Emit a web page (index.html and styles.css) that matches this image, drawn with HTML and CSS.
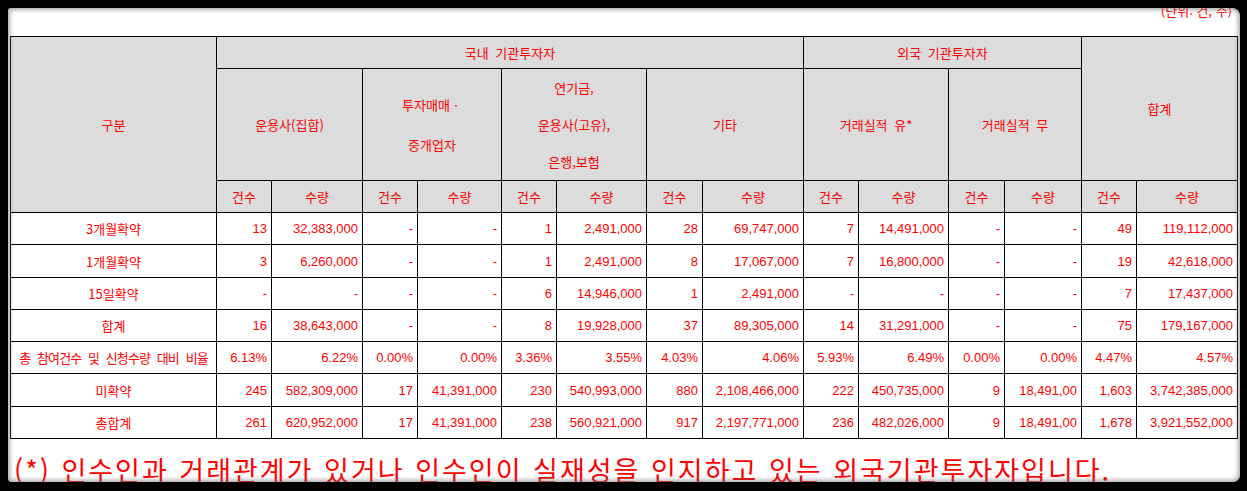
FILE: index.html
```html
<!DOCTYPE html>
<html lang="ko">
<head>
<meta charset="utf-8">
<title>수요예측 참여 내역</title>
<link rel="stylesheet" href="styles.css">
</head>
<body>
<div class="frame">
  <div class="unit">(단위: 건, 주)</div>
  <table class="grid">
    <colgroup>
      <col class="c-label">
      <col class="c55"><col class="c91">
      <col class="c55"><col class="c84">
      <col class="c55"><col class="c90">
      <col class="c56"><col class="c101">
      <col class="c55"><col class="c90">
      <col class="c56"><col class="c77">
      <col class="c55"><col class="c101">
    </colgroup>
    <thead>
      <tr class="h1">
        <th rowspan="3">구분</th>
        <th colspan="8">국내 기관투자자</th>
        <th colspan="4">외국 기관투자자</th>
        <th colspan="2" rowspan="2">합계</th>
      </tr>
      <tr class="h2">
        <th colspan="2">운용사(집합)</th>
        <th colspan="2" class="two">투자매매ㆍ<br>중개업자</th>
        <th colspan="2" class="three">연기금,<br>운용사(고유),<br>은행,보험</th>
        <th colspan="2">기타</th>
        <th colspan="2">거래실적 유*</th>
        <th colspan="2">거래실적 무</th>
      </tr>
      <tr class="h3">
        <th>건수</th><th>수량</th>
        <th>건수</th><th>수량</th>
        <th>건수</th><th>수량</th>
        <th>건수</th><th>수량</th>
        <th>건수</th><th>수량</th>
        <th>건수</th><th>수량</th>
        <th>건수</th><th>수량</th>
      </tr>
    </thead>
    <tbody>
      <tr class="r32">
        <td class="label">3개월확약</td>
        <td>13</td><td>32,383,000</td><td>-</td><td>-</td><td>1</td><td>2,491,000</td><td>28</td><td>69,747,000</td><td>7</td><td>14,491,000</td><td>-</td><td>-</td><td>49</td><td>119,112,000</td>
      </tr>
      <tr class="r33">
        <td class="label">1개월확약</td>
        <td>3</td><td>6,260,000</td><td>-</td><td>-</td><td>1</td><td>2,491,000</td><td>8</td><td>17,067,000</td><td>7</td><td>16,800,000</td><td>-</td><td>-</td><td>19</td><td>42,618,000</td>
      </tr>
      <tr class="r32">
        <td class="label">15일확약</td>
        <td>-</td><td>-</td><td>-</td><td>-</td><td>6</td><td>14,946,000</td><td>1</td><td>2,491,000</td><td>-</td><td>-</td><td>-</td><td>-</td><td>7</td><td>17,437,000</td>
      </tr>
      <tr class="r32">
        <td class="label">합계</td>
        <td>16</td><td>38,643,000</td><td>-</td><td>-</td><td>8</td><td>19,928,000</td><td>37</td><td>89,305,000</td><td>14</td><td>31,291,000</td><td>-</td><td>-</td><td>75</td><td>179,167,000</td>
      </tr>
      <tr class="r32">
        <td class="label tight">총 참여건수 및 신청수량 대비 비율</td>
        <td>6.13%</td><td>6.22%</td><td>0.00%</td><td>0.00%</td><td>3.36%</td><td>3.55%</td><td>4.03%</td><td>4.06%</td><td>5.93%</td><td>6.49%</td><td>0.00%</td><td>0.00%</td><td>4.47%</td><td>4.57%</td>
      </tr>
      <tr class="r33">
        <td class="label">미확약</td>
        <td>245</td><td>582,309,000</td><td>17</td><td>41,391,000</td><td>230</td><td>540,993,000</td><td>880</td><td>2,108,466,000</td><td>222</td><td>450,735,000</td><td>9</td><td>18,491,00</td><td>1,603</td><td>3,742,385,000</td>
      </tr>
      <tr class="r32">
        <td class="label">총합계</td>
        <td>261</td><td>620,952,000</td><td>17</td><td>41,391,000</td><td>238</td><td>560,921,000</td><td>917</td><td>2,197,771,000</td><td>236</td><td>482,026,000</td><td>9</td><td>18,491,00</td><td>1,678</td><td>3,921,552,000</td>
      </tr>
    </tbody>
  </table>
  <p class="note">(*) 인수인과 거래관계가 있거나 인수인이 실재성을 인지하고 있는 외국기관투자자입니다.</p>
</div>
</body>
</html>
```
FILE: styles.css
```css
html, body {
  margin: 0;
  padding: 0;
  background: #000;
}

body {
  width: 1247px;
  height: 491px;
  overflow: hidden;
  font-family: "Noto Sans CJK KR", "Liberation Sans", sans-serif;
  color: #ff0000;
}

.frame {
  position: relative;
  box-sizing: border-box;
  margin: 8px 0 0 8px;
  width: 1232px;
  height: 474px;
  padding-left: 2px;
  background: #fff;
  border-radius: 3px 8px 7px 4px;
  overflow: hidden;
}

.frame::after {
  content: "";
  position: absolute;
  inset: 0;
  border-radius: inherit;
  box-shadow: inset 0 0 4px 2px rgba(110, 110, 110, 0.6);
  pointer-events: none;
}

.unit {
  height: 13px;
  margin-top: -4px;
  margin-bottom: 19px;
  padding-right: 8px;
  font-size: 13px;
  line-height: 13px;
  letter-spacing: 0;
  text-align: right;
}

.grid {
  border-collapse: collapse;
  table-layout: fixed;
  width: 1228px;
}

.c-label { width: 206px; }
.c55 { width: 55px; }
.c56 { width: 56px; }
.c77 { width: 77px; }
.c84 { width: 84px; }
.c90 { width: 90px; }
.c91 { width: 91px; }
.c101 { width: 101px; }

.grid th,
.grid td {
  border: 1px solid #000;
  padding: 0;
  vertical-align: middle;
  white-space: nowrap;
  overflow: hidden;
}

.grid th {
  background: #dcdcdc;
  font-weight: normal;
  font-size: 13px;
  line-height: 15px;
  text-align: center;
  word-spacing: 3px;
}

.h1, .h3 { height: 32px; }
.h2 { height: 112px; }

.grid th.two { line-height: 40px; }
.grid th.three { line-height: 37px; }

.r32 { height: 32px; }
.r33 { height: 33px; }

.grid td {
  font-family: "Liberation Sans", "Noto Sans CJK KR", sans-serif;
  font-size: 13px;
  line-height: 15px;
  text-align: right;
  padding-right: 4px;
}

.grid td.label {
  font-family: "Noto Sans CJK KR", "Liberation Sans", sans-serif;
  font-size: 13px;
  text-align: center;
  padding-right: 0;
}

.grid td.tight {
  letter-spacing: -0.9px;
  word-spacing: 4px;
}

.note {
  margin: 17px 0 0 0;
  padding-left: 4px;
  font-size: 27px;
  line-height: 27px;
  letter-spacing: 2px;
  word-spacing: 1px;
  white-space: nowrap;
}
```
